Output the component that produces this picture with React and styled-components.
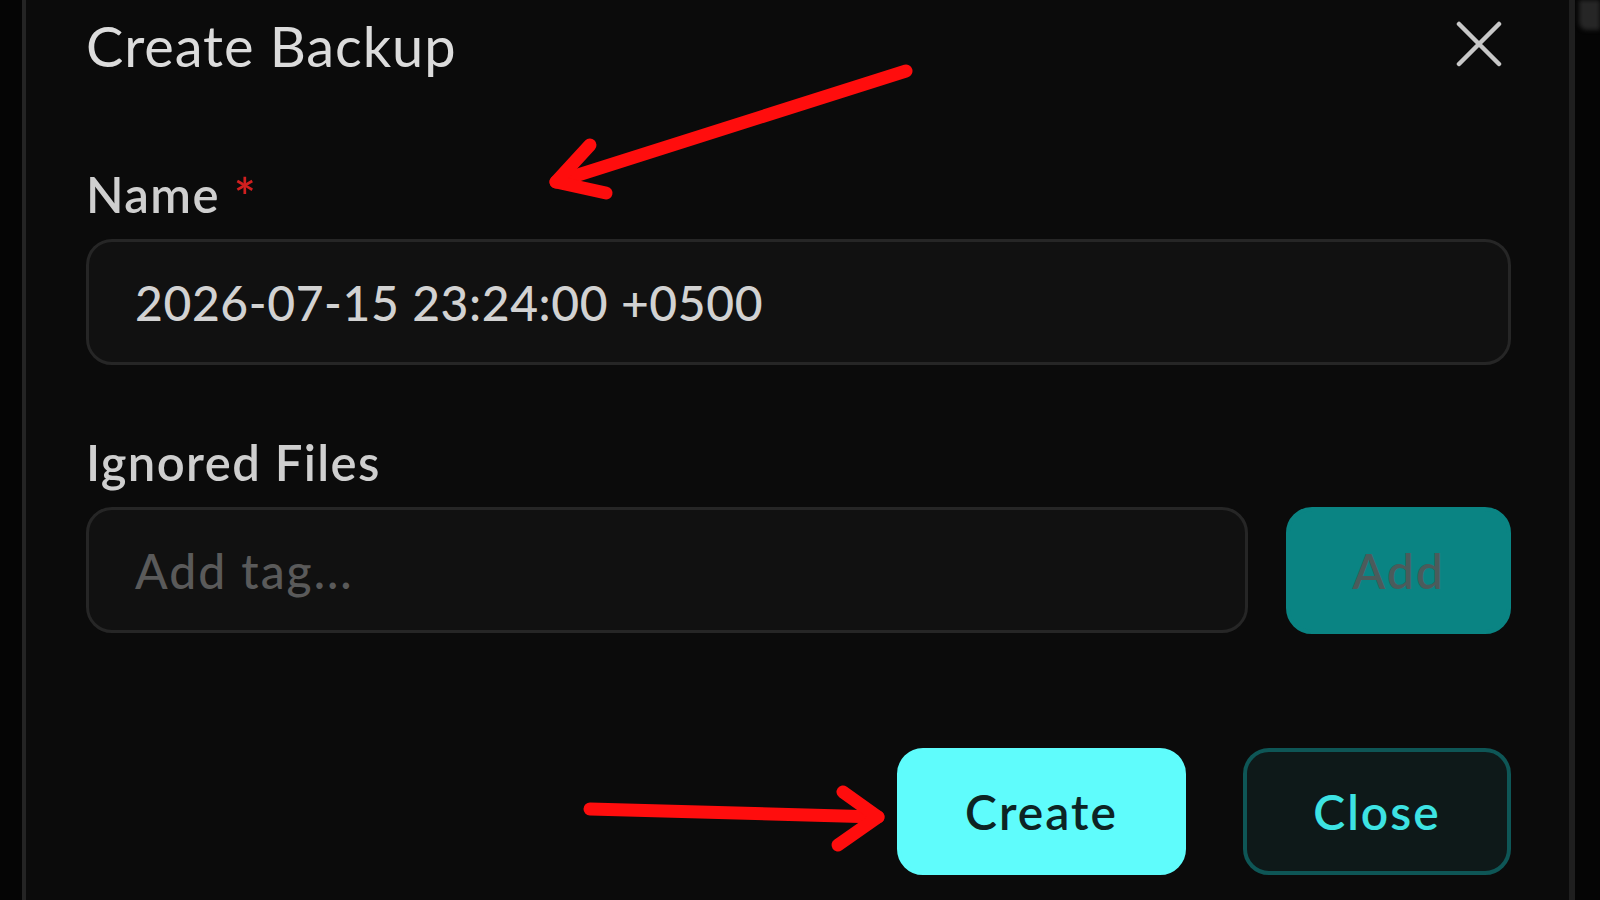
import React from "react";
import styled, { createGlobalStyle } from "styled-components";

const Global = createGlobalStyle`
  html, body {
    margin: 0;
    padding: 0;
    background: #050505;
    overflow: hidden;
  }
  * { box-sizing: border-box; }
`;

const Screen = styled.div`
  position: relative;
  width: 1600px;
  height: 900px;
  display: flex;
  padding-left: 22px;
  background: #050505;
  font-family: "Lato", "Inter", sans-serif;
`;

const Dialog = styled.section`
  width: 1553px;
  height: 100%;
  background: #0b0b0b;
  border-left: 4px solid #242424;
  border-right: 6px solid #1f1f1f;
  padding: 0 58px 0 60px;
  display: flex;
  flex-direction: column;
`;

const SidePane = styled.div`
  flex: 1;
  display: flex;
  flex-direction: column;
`;

const SideBlock = styled.div`
  height: 30px;
  margin-left: 4px;
  background: #262626;
  border-bottom-left-radius: 8px;
  filter: blur(2px);
`;

const Header = styled.header`
  display: flex;
  justify-content: space-between;
  align-items: flex-start;
  height: 150px;
  padding-top: 12px;
`;

const Title = styled.h2`
  margin: 0;
  font-size: 56px;
  line-height: 67px;
  font-weight: 400;
  color: #dcdcdc;
  letter-spacing: 0.9px;
`;

const CloseIcon = styled.button`
  width: 48px;
  height: 48px;
  margin: 8px 8px 0 0;
  padding: 0;
  border: 0;
  background: transparent;
  color: #c8c8c8;
  display: flex;
  align-items: center;
  justify-content: center;
  cursor: pointer;
`;

const Field = styled.div`
  display: flex;
  flex-direction: column;
  margin-bottom: ${(p) => p.$gap || 0}px;
`;

const Label = styled.label`
  display: flex;
  align-items: flex-start;
  gap: 14px;
  font-size: 49px;
  line-height: 60px;
  font-weight: 600;
  color: #cfcfcf;
  letter-spacing: 1.4px;
  height: ${(p) => p.$h}px;
  padding-top: ${(p) => p.$top || 0}px;
`;

const Required = styled.span`
  color: #d11f1f;
  font-size: 52px;
  line-height: 52px;
  margin-top: 6px;
`;

const TextBox = styled.div`
  height: 126px;
  flex: ${(p) => (p.$grow ? 1 : "none")};
  background: #111111;
  border: 3px solid #262626;
  border-radius: 26px;
  display: flex;
  align-items: center;
  padding-left: 46px;
  font-size: 48px;
  font-weight: 500;
  color: ${(p) => (p.$placeholder ? "#5a5a5a" : "#d2d2d2")};
  letter-spacing: ${(p) => (p.$placeholder ? 2 : 0.6)}px;
`;

const TagRow = styled.div`
  display: flex;
  gap: 38px;
`;

const Button = styled.button`
  height: 127px;
  width: ${(p) => p.$w}px;
  border-radius: 26px;
  font-family: inherit;
  font-size: 48px;
  font-weight: 600;
  letter-spacing: 2px;
  display: flex;
  align-items: center;
  justify-content: center;
  cursor: pointer;
  background: ${(p) => p.$bg};
  color: ${(p) => p.$fg};
  border: 4px solid ${(p) => p.$border || p.$bg};
`;

const Footer = styled.footer`
  display: flex;
  justify-content: flex-end;
  gap: 57px;
  margin-top: 114px;
`;

const Annotations = styled.svg`
  position: absolute;
  inset: 0;
  pointer-events: none;
`;

function Arrow({ from, tip, wings }) {
  return (
    <g stroke="#ff0d0d" strokeWidth="13" strokeLinecap="round" strokeLinejoin="round" fill="none">
      <line x1={from[0]} y1={from[1]} x2={tip[0]} y2={tip[1]} />
      <polyline points={`${wings[0][0]},${wings[0][1]} ${tip[0]},${tip[1]} ${wings[1][0]},${wings[1][1]}`} />
    </g>
  );
}

export default function App() {
  return (
    <>
      <Global />
      <Screen>
        <Dialog>
          <Header>
            <Title>Create Backup</Title>
            <CloseIcon aria-label="Close">
              <svg width="46" height="46" viewBox="0 0 46 46">
                <path d="M3 3 L43 43 M43 3 L3 43" stroke="currentColor" strokeWidth="4.5" strokeLinecap="round" />
              </svg>
            </CloseIcon>
          </Header>

          <Field $gap={64}>
            <Label $h={89} $top={14}>
              Name <Required>*</Required>
            </Label>
            <TextBox>2026-07-15 23:24:00 +0500</TextBox>
          </Field>

          <Field>
            <Label $h={78} $top={3}>Ignored Files</Label>
            <TagRow>
              <TextBox $grow $placeholder>Add tag...</TextBox>
              <Button $w={225} $bg="#0a8483" $fg="#4b5b5b">Add</Button>
            </TagRow>
          </Field>

          <Footer>
            <Button $w={289} $bg="#5ffcfc" $fg="#0d2424">Create</Button>
            <Button $w={268} $bg="#0e1919" $fg="#3de3e3" $border="#0e5656">Close</Button>
          </Footer>
        </Dialog>
        <SidePane>
          <SideBlock />
        </SidePane>

        <Annotations width="1600" height="900" viewBox="0 0 1600 900">
          <Arrow from={[906, 71]} tip={[556, 182]} wings={[[590, 145], [606, 193]]} />
          <Arrow from={[590, 809]} tip={[878, 817]} wings={[[843, 792], [838, 845]]} />
        </Annotations>
      </Screen>
    </>
  );
}
